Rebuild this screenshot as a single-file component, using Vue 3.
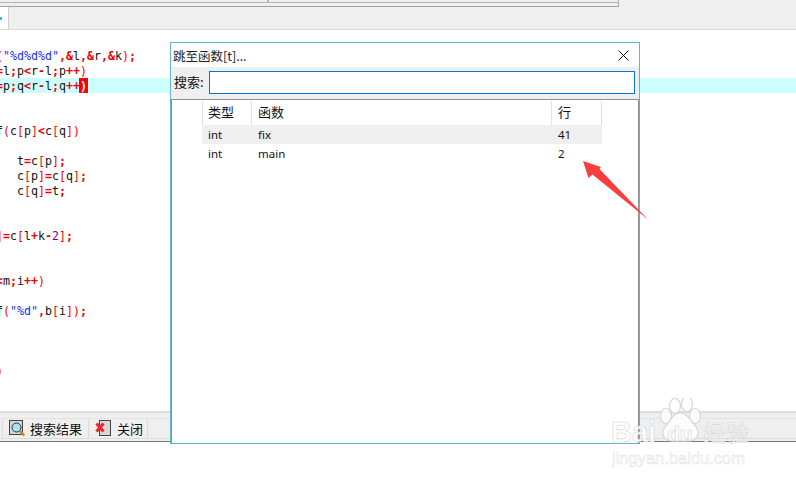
<script setup>
const source = [
  { y: 0, t: '("%d%d%d",&l,&r,&k);' },
  { y: 1, t: '=l;p<r-l;p++)' },
  { y: 2, t: '=p;q<r-l;q++', hl: true },
  { y: 3, t: '' },
  { y: 4, t: '' },
  { y: 5, t: 'f(c[p]<c[q])' },
  { y: 6, t: '' },
  { y: 7, t: '   t=c[p];' },
  { y: 8, t: '   c[p]=c[q];' },
  { y: 9, t: '   c[q]=t;' },
  { y: 10, t: '' },
  { y: 11, t: '' },
  { y: 12, t: ']=c[l+k-2];' },
  { y: 13, t: '' },
  { y: 14, t: '' },
  { y: 15, t: '<m;i++)' },
  { y: 16, t: '' },
  { y: 17, t: 'f("%d",b[i]);' },
  { y: 18, t: '' },
  { y: 19, t: '' },
  { y: 20, t: '' },
  { y: 21, t: ')' }
]

function tokenize(text) {
  const out = []
  const re = /("[^"]*")|(\d+)|([A-Za-z_ ]+)|([()\[\]])|([^A-Za-z_ \d"])/g
  let m
  while ((m = re.exec(text))) {
    if (m[1]) out.push({ s: m[1], c: 'str' })
    else if (m[2]) out.push({ s: m[2], c: 'num' })
    else if (m[3]) out.push({ s: m[3], c: 'id' })
    else if (m[4]) out.push({ s: m[4], c: 'br' })
    else out.push({ s: m[5], c: 'op' })
  }
  return out
}

const lines = source.map((l) => ({ ...l, tokens: tokenize(l.t) }))

const rows = [
  { type: 'int', name: 'fix', line: '41', alt: true },
  { type: 'int', name: 'main', line: '2', alt: false }
]
</script>

<template>
  <div class="page">
    <div class="toolbar">
      <div class="top-strip">
        <div class="strip-box">
          <div class="strip-cell"></div>
        </div>
      </div>
      <div class="tabs">
        <div class="tab"><span class="tab-mark"></span></div>
      </div>
    </div>

    <div class="editor">
      <div class="code">
        <div v-for="l in lines" :key="l.y" class="line" :class="{ hl: l.hl }">
          <span v-for="(tk, i) in l.tokens" :key="i" :class="tk.c">{{ tk.s }}</span>
          <span v-if="l.hl" class="match">)</span>
        </div>
      </div>
    </div>

    <div class="bottom">
      <div class="bottom-row">
        <div class="bottom-tab first"></div>
        <div class="bottom-tab search">
          <svg class="ico" width="16" height="17" viewBox="0 0 16 17">
            <rect x="0.5" y="0.5" width="13" height="14" fill="#d4d4d4" stroke="#444" />
            <circle cx="7.5" cy="7.5" r="4.5" fill="#a5e2f2" stroke="#333" />
            <path d="M10.8 10.8l4.4 4.6" stroke="#c98a1e" stroke-width="2.4" />
          </svg>
          <span>搜索结果</span>
        </div>
        <div class="bottom-tab close">
          <svg class="ico" width="16" height="17" viewBox="0 0 16 17">
            <rect x="4.5" y="0.5" width="11" height="15" fill="#d8d8d8" stroke="#444" />
            <path d="M1.5 3.5l7 8M8.5 3.5l-7 8" stroke="#e8282c" stroke-width="3" />
          </svg>
          <span>关闭</span>
        </div>
      </div>
    </div>

    <div class="dialog">
      <div class="dlg-title">
        <span>跳至函数[t]...</span>
        <svg class="x" width="11" height="11" viewBox="0 0 11 11">
          <path d="M0.5 0.5l10 10M10.5 0.5l-10 10" stroke="#111" stroke-width="1" fill="none" />
        </svg>
      </div>
      <div class="dlg-search">
        <label>搜索:</label>
        <div class="input"></div>
      </div>
      <div class="list">
        <div class="grid head">
          <div class="cell">类型</div>
          <div class="cell">函数</div>
          <div class="cell">行</div>
        </div>
        <div v-for="r in rows" :key="r.name" class="grid row" :class="{ alt: r.alt }">
          <div class="cell">{{ r.type }}</div>
          <div class="cell">{{ r.name }}</div>
          <div class="cell">{{ r.line }}</div>
        </div>
      </div>
    </div>

    <svg class="arrow" width="70" height="64" viewBox="0 0 70 64">
      <path d="M0 0L5.5 17L9.5 13.5L65 58.5L16.5 8L18 6Z" fill="#fa3d3d" />
    </svg>

    <div class="mark">
      <svg class="paw" width="44" height="48" viewBox="0 0 44 48">
        <g fill="rgba(255,255,255,0.8)" stroke="#d6d6d6" stroke-width="1.2">
          <ellipse cx="7" cy="18" rx="5.5" ry="7.5" />
          <ellipse cx="16" cy="8" rx="5.5" ry="7.5" />
          <ellipse cx="28" cy="6" rx="5.5" ry="7.5" />
          <ellipse cx="36" cy="18" rx="5.5" ry="7.5" />
          <path d="M21 15c-6 0-8 5-12 10-5 5-7 9-4 14 3 5 9 4 16 4s14 1 17-4c3-5 1-9-4-14-4-5-7-10-13-10z" />
        </g>
      </svg>
      <span class="mk-bai">Bai</span>
      <span class="mk-du">du</span>
      <span class="mk-cn">经验</span>
      <span class="mk-url">jingyan.baidu.com</span>
    </div>
  </div>
</template>

<style>
html, body { margin: 0; background: #fff; }
</style>

<style scoped>
.page {
  position: relative;
  width: 796px;
  height: 484px;
  overflow: hidden;
  background: #fff;
  font-family: "Noto Sans CJK SC", "Noto Sans", sans-serif;
  font-size: 12px;
  color: #111;
}
.toolbar {
  height: 29px;
  background: #efefef;
  border-bottom: 1px solid #d8d8d8;
  display: flex;
  flex-direction: column;
}
.top-strip { height: 7px; flex: none; }
.strip-box {
  width: 619px;
  height: 7px;
  box-sizing: border-box;
  background: linear-gradient(#efefef 2px, #b4b4b4 2px, #b4b4b4 3px, #efefef 3px);
  border-bottom: 1px solid #a0a0a0;
  border-right: 1px solid #a8a8a8;
}
.strip-cell {
  width: 269px;
  height: 2px;
  box-sizing: border-box;
  border-right: 2px solid #b4b4b4;
}
.tabs { flex: 1; display: flex; }
.tab {
  width: 8px;
  background: #fff;
  border-right: 1px solid #d0d0d0;
  position: relative;
}
.tab-mark {
  position: absolute;
  left: 0;
  top: 10px;
  width: 2px;
  height: 3px;
  background: #3fb4e8;
}
.editor {
  height: 381px;
  overflow: hidden;
}
.code {
  padding-top: 18px;
  margin-left: -4px;
  font-family: "DejaVu Sans Mono", monospace;
  font-size: 11.63px;
}
.line {
  height: 15px;
  line-height: 17px;
  white-space: pre;
}
.line.hl { background: #ccffff; }
.id { color: #111; }
.op { color: #f40000; font-weight: 700; }
.br { color: #f40000; }
.str { color: #1a2ff0; }
.num { color: #800080; }
.match {
  display: inline-block;
  height: 15px;
  vertical-align: top;
  margin-left: -1px;
  background: #f00;
  color: #fff;
  font-weight: 700;
  width: 9px;
  text-align: center;
}
.bottom {
  height: 31px;
  box-sizing: border-box;
  background: #efefef;
  border-top: 2px solid #dcdcdc;
  border-bottom: 1px solid #777;
  padding-top: 5px;
}
.bottom-row {
  height: 21px;
  box-sizing: border-box;
  border-top: 1px solid #e2e2e2;
  border-bottom: 1px solid #dcdcdc;
  display: flex;
}
.bottom-tab {
  display: flex;
  align-items: center;
  box-sizing: border-box;
  border-right: 1px solid #dcdcdc;
  font-size: 13px;
}
.first { width: 3px; }
.search { width: 86px; padding-left: 6px; gap: 5px; }
.close { width: 59px; padding-left: 6px; gap: 6px; }
.ico { flex: none; }
.dialog {
  position: absolute;
  left: 170px;
  top: 42px;
  width: 470px;
  height: 402px;
  box-sizing: border-box;
  border: 1px solid #62b6cb;
  background: #fff;
  display: flex;
  flex-direction: column;
}
.dlg-title {
  height: 24px;
  flex: none;
  display: flex;
  align-items: center;
  justify-content: space-between;
  padding: 0 10px 0 2px;
  font-size: 12.5px;
  color: #222;
}
.dlg-search {
  height: 32px;
  flex: none;
  box-sizing: border-box;
  background: #efefef;
  display: flex;
  align-items: center;
  padding: 0 4px 1px 3px;
  font-size: 13px;
}
.dlg-search label { width: 35px; flex: none; position: relative; top: -1px; }
.input {
  flex: 1;
  height: 23px;
  box-sizing: border-box;
  border: 1px solid #0078d7;
  background: #fff;
}
.list {
  flex: 1;
  box-sizing: border-box;
  border-top: 1px solid #8e8e8e;
  border-left: 1px solid #8e8e8e;
  border-right: 1px solid #8e8e8e;
  padding-left: 30px;
  padding-top: 1px;
}
.grid {
  display: grid;
  grid-template-columns: 49px 300px 51px;
  width: 400px;
}
.head { height: 24px; }
.head .cell {
  box-shadow: inset 1px 0 0 #e2e2e2;
  line-height: 22px;
  font-size: 13px;
  font-family: "Noto Sans CJK SC", sans-serif;
}
.head .cell:last-child { box-shadow: inset 1px 0 0 #e2e2e2, inset -1px 0 0 #e2e2e2; }
.row { height: 19px; }
.row.alt { background: #efefef; }
.cell {
  padding-left: 7px;
  line-height: 19px;
  font-family: "Noto Sans", sans-serif;
  font-size: 11.5px;
}
.cell:first-child { padding-left: 6px; }
.arrow {
  position: absolute;
  left: 583px;
  top: 161px;
}
.mark {
  position: absolute;
  left: 0;
  top: 0;
  width: 796px;
  height: 484px;
  pointer-events: none;
}
.paw { position: absolute; left: 659px; top: 398px; }
.mk-bai, .mk-du, .mk-cn, .mk-url {
  position: absolute;
  font-family: "Liberation Sans", sans-serif;
  color: rgba(255, 255, 255, 0.85);
  -webkit-text-stroke: 0.6px #d4d4d4;
}
.mk-bai { left: 611px; top: 415px; font-size: 29px; line-height: 34px; font-weight: 700; }
.mk-du { left: 667px; top: 422px; font-size: 21px; line-height: 24px; font-weight: 700; }
.mk-cn {
  left: 703px;
  top: 416px;
  font-size: 23px;
  line-height: 30px;
  font-family: "Noto Sans CJK SC", sans-serif;
}
.mk-url { left: 612px; top: 448px; font-size: 16.5px; line-height: 20px; -webkit-text-stroke: 0.4px #d8d8d8; }
</style>
